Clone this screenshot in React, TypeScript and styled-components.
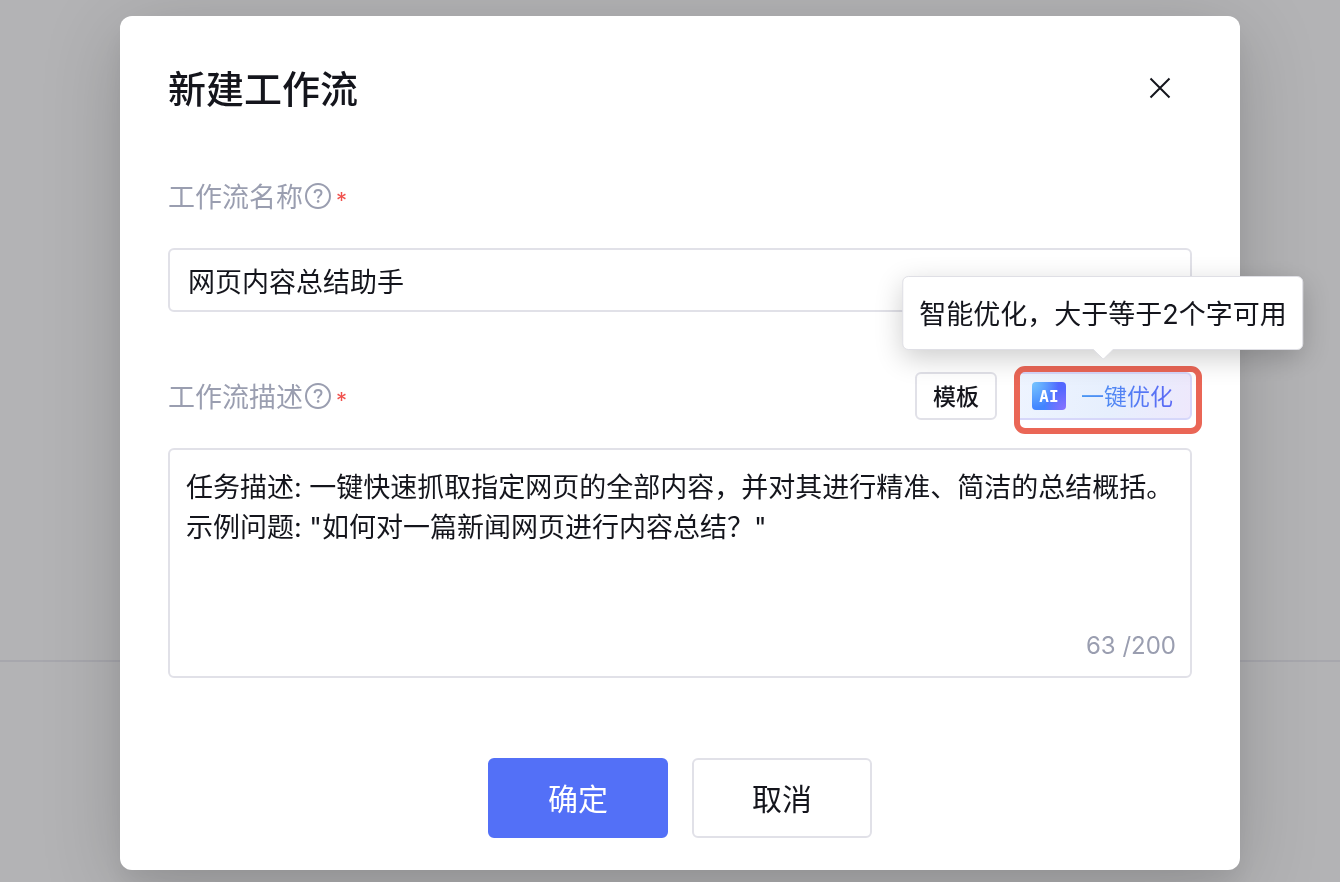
import React, { useState } from "react";
import styled, { createGlobalStyle } from "styled-components";

const ink = "#14151c";
const muted = "#9a9eb0";
const line = "#e1e1e8";
const accent = "#5370f7";

const GlobalStyle = createGlobalStyle`
  *, *::before, *::after { box-sizing: border-box; }
  body {
    margin: 0;
    color: ${ink};
    font-family: Inter, "Noto Sans CJK SC", sans-serif;
    font-size: 27px;
  }
  button, input, textarea { font: inherit; color: inherit; margin: 0; }
  button { cursor: pointer; }
`;

const Page = styled.div`
  position: fixed;
  inset: 0;
  z-index: -1;
  display: grid;
  grid-template-rows: 662px 1fr;
  background: #b3b3b5;
`;

const PageSection = styled.div`
  border-bottom: 2px solid #a7a7ad;
`;

const Overlay = styled.div`
  min-height: 100vh;
  padding: 16px 100px 12px 120px;
  overflow: hidden;
`;

const Dialog = styled.form`
  display: flex;
  flex-direction: column;
  padding: 48px 48px 32px;
  border-radius: 12px;
  background: #fff;
  box-shadow: 0 16px 24px rgba(0, 0, 0, 0.06), 0 16px 80px rgba(0, 0, 0, 0.18);
`;

const Header = styled.header`
  display: flex;
  align-items: center;
  justify-content: space-between;
  height: 48px;
  margin-bottom: 60px;
`;

const Title = styled.h1`
  margin: 0;
  padding-top: 2px;
  font-size: 38px;
  line-height: 48px;
  font-weight: 500;
`;

const CloseButton = styled.button`
  display: grid;
  place-items: center;
  width: 64px;
  height: 48px;
  padding: 0;
  border: 0;
  background: none;
`;

const FieldHead = styled.div`
  display: flex;
  align-items: center;
  justify-content: space-between;
  height: 48px;
  margin-bottom: 28px;
`;

const LabelGroup = styled.div`
  display: flex;
  align-items: center;
  color: ${muted};
`;

const Label = styled.label`
  padding-top: 3px;
  line-height: 40px;
`;

const HelpButton = styled.button`
  display: flex;
  padding: 0;
  margin-left: 2px;
  border: 0;
  background: none;
`;

const Required = styled.span`
  margin-left: 5px;
  padding-top: 8px;
  color: #f0514d;
  font-size: 22px;
  line-height: 24px;
`;

const NameInput = styled.input`
  width: 100%;
  height: 64px;
  padding: 0 18px;
  margin-bottom: 60px;
  border: 2px solid ${line};
  border-radius: 6px;
  background: #fff;
  outline: none;
`;

const Actions = styled.div`
  display: flex;
  gap: 17px;
`;

const TemplateButton = styled.button`
  height: 48px;
  width: 82px;
  padding: 0 0 2px;
  border: 2px solid ${line};
  border-radius: 6px;
  background: #fff;
  font-size: 23px;
  font-weight: 500;
`;

const OptimizeWrap = styled.div`
  position: relative;
`;

const OptimizeButton = styled.button`
  display: flex;
  align-items: center;
  gap: 15px;
  width: 178px;
  height: 48px;
  padding: 0 16px;
  border: 2px solid #d6d7fa;
  border-radius: 6px;
  background: linear-gradient(100deg, #eef4ff 0%, #e6effd 55%, #eee8fc 100%);
  font-size: 23px;
`;

const AiBadge = styled.span`
  flex: none;
  width: 34px;
  height: 28px;
  border-radius: 4px;
  background:
    radial-gradient(circle at 0 0, #79c7ff 0%, rgba(121, 199, 255, 0) 60%),
    radial-gradient(circle at 100% 100%, #8a74ff 0%, rgba(138, 116, 255, 0) 50%),
    linear-gradient(75deg, #4285ff 30%, #5468ff 80%);
  color: #fff;
  font: bold 16px/30px "DejaVu Sans Mono", monospace;
  text-align: center;
`;

const GradientText = styled.span`
  padding-bottom: 2px;
  white-space: nowrap;
  background: linear-gradient(90deg, #4a97f3, #5b68f5);
  background-clip: text;
  -webkit-background-clip: text;
  color: transparent;
`;

const HighlightFrame = styled.div`
  position: absolute;
  inset: -6px -10px -14px 0;
  border: 6px solid #ea6656;
  border-radius: 11px;
  pointer-events: none;
`;

const Tooltip = styled.div`
  position: absolute;
  left: 50%;
  bottom: calc(100% + 22px);
  transform: translateX(-50%);
  width: max-content;
  padding: 19px 16px 15px;
  border: 1px solid #dfdfe5;
  border-radius: 6px;
  background: #fff;
  box-shadow: 0 8px 28px rgba(0, 0, 0, 0.2);
  line-height: 38px;
  white-space: nowrap;
`;

const TooltipArrow = styled.svg`
  position: absolute;
  top: 100%;
  left: 50%;
  margin-left: -12px;
`;

const DescriptionBox = styled.div`
  display: flex;
  flex-direction: column;
  padding-bottom: 10px;
  border: 2px solid ${line};
  border-radius: 6px;
`;

const DescriptionInput = styled.textarea`
  display: block;
  width: 100%;
  height: 176px;
  padding: 18px 8px 0 16px;
  border: 0;
  outline: none;
  background: none;
  resize: none;
  line-height: 40px;
`;

const Counter = styled.output`
  padding-right: 14px;
  color: ${muted};
  font-size: 24px;
  line-height: 40px;
  text-align: right;
`;

const Footer = styled.footer`
  display: flex;
  justify-content: center;
  gap: 24px;
  margin-top: 80px;
`;

const FooterButton = styled.button<{ $primary?: boolean }>`
  width: 180px;
  height: 80px;
  padding: 0 0 2px;
  border: 2px solid ${(p) => (p.$primary ? accent : line)};
  border-radius: 6px;
  background: ${(p) => (p.$primary ? accent : "#fff")};
  color: ${(p) => (p.$primary ? "#fff" : ink)};
  font-size: 30px;
`;

function FieldLabel({ htmlFor, children }: { htmlFor: string; children: React.ReactNode }) {
  return (
    <LabelGroup>
      <Label htmlFor={htmlFor}>{children}</Label>
      <HelpButton type="button" aria-label="帮助">
        <svg width="26" height="26" viewBox="0 0 26 26" fill="none" stroke="currentColor" strokeWidth="2">
          <circle cx="13" cy="13" r="12" />
          <path d="M9.6 10.1C9.7 8 11 6.9 13.1 6.9c2 0 3.4 1.1 3.4 2.9 0 1.4-.8 2.1-1.8 2.9-1.1.9-1.6 1.4-1.6 2.9" />
          <circle cx="13.1" cy="18.4" r="1.3" fill="currentColor" stroke="none" />
        </svg>
      </HelpButton>
      <Required aria-hidden="true">*</Required>
    </LabelGroup>
  );
}

export default function App() {
  const [name, setName] = useState("网页内容总结助手");
  const [description, setDescription] = useState(
    '任务描述: 一键快速抓取指定网页的全部内容，并对其进行精准、简洁的总结概括。\n示例问题: "如何对一篇新闻网页进行内容总结？"'
  );
  const [count, setCount] = useState(63);

  return (
    <>
      <GlobalStyle />
      <Page>
        <PageSection />
      </Page>
      <Overlay>
        <Dialog role="dialog" aria-labelledby="dialog-title" onSubmit={(e) => e.preventDefault()}>
          <Header>
            <Title id="dialog-title">新建工作流</Title>
            <CloseButton type="button" aria-label="关闭">
              <svg width="22" height="22" viewBox="0 0 22 22" fill="none" stroke={ink} strokeWidth="2">
                <path d="M1.5 1.5l19 19M20.5 1.5l-19 19" />
              </svg>
            </CloseButton>
          </Header>

          <FieldHead>
            <FieldLabel htmlFor="flow-name">工作流名称</FieldLabel>
          </FieldHead>
          <NameInput id="flow-name" required value={name} onChange={(e) => setName(e.target.value)} />

          <FieldHead>
            <FieldLabel htmlFor="flow-description">工作流描述</FieldLabel>
            <Actions>
              <TemplateButton type="button">模板</TemplateButton>
              <OptimizeWrap>
                <OptimizeButton type="button" aria-describedby="optimize-tip">
                  <AiBadge>AI</AiBadge>
                  <GradientText>一键优化</GradientText>
                </OptimizeButton>
                <HighlightFrame />
                <Tooltip role="tooltip" id="optimize-tip">
                  智能优化，大于等于2个字可用
                  <TooltipArrow width="24" height="11" viewBox="0 0 24 11">
                    <path d="M1 -1L11 9.3q1 1 2 0L23 -1z" fill="#fff" />
                    <path d="M2 .5L11 9.3q1 1 2 0L22 .5" fill="none" stroke="#dfdfe5" />
                  </TooltipArrow>
                </Tooltip>
              </OptimizeWrap>
            </Actions>
          </FieldHead>
          <DescriptionBox>
            <DescriptionInput
              id="flow-description"
              required
              maxLength={200}
              value={description}
              onChange={(e) => {
                setDescription(e.target.value);
                setCount(e.target.value.length);
              }}
            />
            <Counter htmlFor="flow-description">{count} /200</Counter>
          </DescriptionBox>

          <Footer>
            <FooterButton type="submit" $primary>
              确定
            </FooterButton>
            <FooterButton type="button">取消</FooterButton>
          </Footer>
        </Dialog>
      </Overlay>
    </>
  );
}
